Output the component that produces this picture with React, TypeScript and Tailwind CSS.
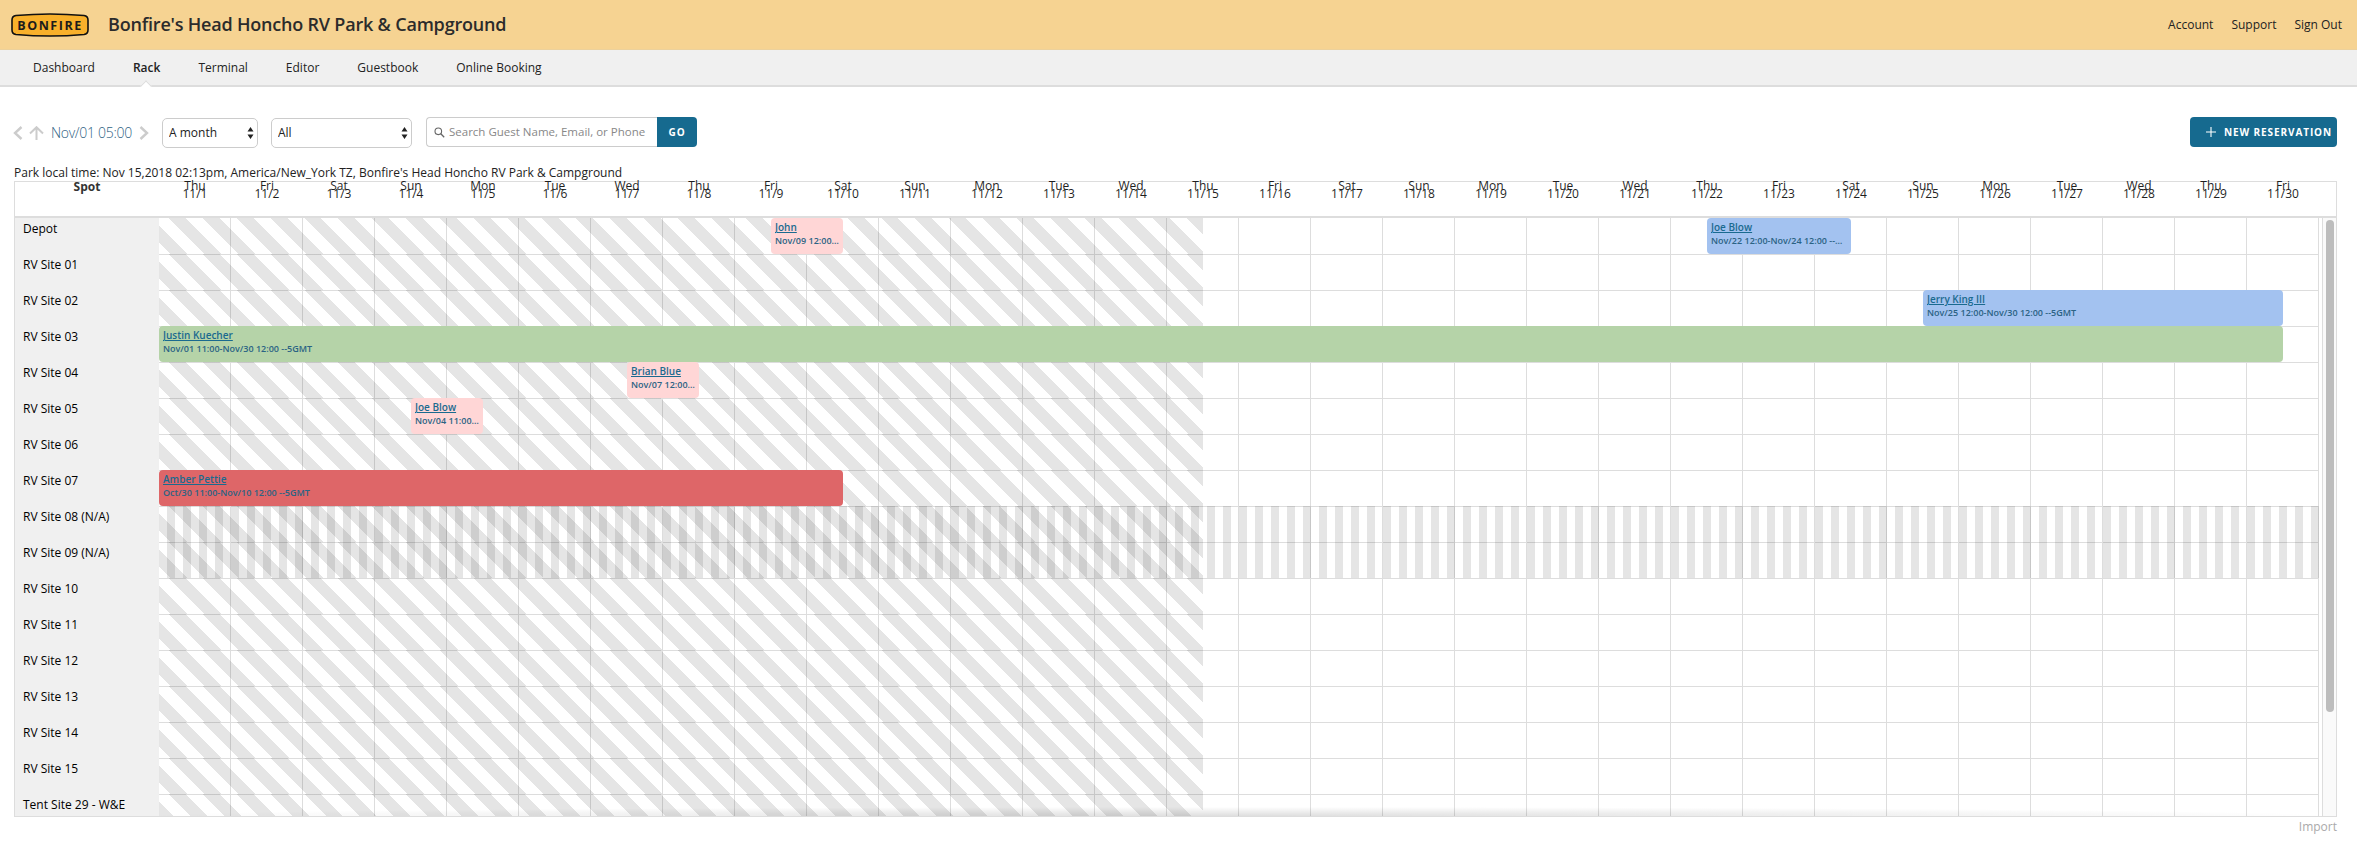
import React from "react";

const days = ["Thu","Fri","Sat","Sun","Mon","Tue","Wed"];
const dates = Array.from({ length: 30 }, (_, i) => ({ day: days[i % 7], date: `11/${i + 1}` }));
const spots = ["Depot","RV Site 01","RV Site 02","RV Site 03","RV Site 04","RV Site 05","RV Site 06","RV Site 07","RV Site 08 (N/A)","RV Site 09 (N/A)","RV Site 10","RV Site 11","RV Site 12","RV Site 13","RV Site 14","RV Site 15","Tent Site 29 - W&E"];

type Res = { row: number; start: number; span: number; name: string; info: string; cls: string };
const reservations: Res[] = [
  { row: 0, start: 8.5, span: 1, name: "John", info: "Nov/09 12:00-Nov/10 12:00 --5GMT", cls: "bg-[#ffd6d6]" },
  { row: 0, start: 21.5, span: 2, name: "Joe Blow", info: "Nov/22 12:00-Nov/24 12:00 --5GMT", cls: "bg-[#a3c2f0]" },
  { row: 2, start: 24.5, span: 5, name: "Jerry King III", info: "Nov/25 12:00-Nov/30 12:00 --5GMT", cls: "bg-[#a3c2f0]" },
  { row: 3, start: 0, span: 29.5, name: "Justin Kuecher", info: "Nov/01 11:00-Nov/30 12:00 --5GMT", cls: "bg-[#b5d3a8]" },
  { row: 4, start: 6.5, span: 1, name: "Brian Blue", info: "Nov/07 12:00-Nov/08 12:00 --5GMT", cls: "bg-[#ffd6d6]" },
  { row: 5, start: 3.5, span: 1, name: "Joe Blow", info: "Nov/04 11:00-Nov/05 12:00 --5GMT", cls: "bg-[#ffd6d6]" },
  { row: 7, start: 0, span: 9.5, name: "Amber Pettie", info: "Oct/30 11:00-Nov/10 12:00 --5GMT", cls: "bg-[#de6668]" },
];

function Logo() {
  return (
    <svg width="78" height="24" viewBox="0 0 78 24" className="shrink-0">
      <path d="M5 2.5 Q39 -0.5 73 2.5 Q77 3 77 7 V17 Q77 21 73 21.5 Q39 24.5 5 21.5 Q1 21 1 17 V7 Q1 3 5 2.5 Z" fill="#f8b02b" stroke="#111" strokeWidth="1.6" />
      <text x="39" y="16.8" textAnchor="middle" fontFamily="'Open Sans', sans-serif" fontWeight="700" fontSize="12.5" letterSpacing="1.55" fill="#1b1b1b">BONFIRE</text>
    </svg>
  );
}

function SelectBox({ label, cls }: { label: string; cls: string }) {
  return (
    <div className={`relative h-[30px] mt-px ${cls}`}>
      <select defaultValue={label} className="w-full h-full appearance-none bg-white border border-[#ccc] rounded-[5px] pl-[6px] text-[12px] text-[#222] outline-none">
        <option>{label}</option>
      </select>
      <svg width="7" height="12" viewBox="0 0 7 12" className="absolute right-[4px] top-[9px] pointer-events-none">
        <path d="M3.5 0 L6.5 4.5 H0.5 Z M3.5 12 L6.5 7.5 H0.5 Z" fill="#222" />
      </svg>
    </div>
  );
}

function Row({ label, index }: { label: string; index: number }) {
  const na = label.includes("N/A");
  const bars = reservations.filter((r) => r.row === index);
  return (
    <div className="flex h-[36px] shrink-0">
      <div className="w-[144px] shrink-0 bg-[#f0f0f0] pl-[8px] text-[12px] leading-[22px] text-black whitespace-nowrap">{label}</div>
      <div className="relative flex w-[2160px] shrink-0">
        {dates.map((d) => (
          <div key={d.date} className={`w-[72px] shrink-0 border-r border-[#ddd] ${index === 0 ? "" : "border-t"}`} />
        ))}
        {na && (
          <div className="absolute inset-0 bg-[repeating-linear-gradient(90deg,transparent_0,transparent_8px,rgba(0,0,0,0.1)_8px,rgba(0,0,0,0.1)_16px)]" />
        )}
        <div className="absolute left-0 top-0 bottom-0 w-[1044px] bg-[repeating-linear-gradient(45deg,transparent_0,transparent_8px,rgba(0,0,0,0.1)_8px,rgba(0,0,0,0.1)_20px,transparent_20px,transparent_24px)]" />
        {bars.map((b) => (
          <div
            key={b.name + b.start}
            className={`absolute top-0 h-[36px] rounded-[4px] px-[4px] overflow-hidden ${b.cls}`}
            style={{ left: b.start * 72, width: b.span * 72 }}
          >
            <a className="block truncate text-[10px] font-semibold leading-[14px] mt-[2px] underline text-[#1a6a8f]">{b.name}</a>
            <div className="truncate text-[9px] font-semibold leading-[14px] text-[#2b6384]">{b.info}</div>
          </div>
        ))}
      </div>
    </div>
  );
}

export default function App() {
  return (
    <div className="font-['Open_Sans',sans-serif] bg-white h-[851px] overflow-hidden text-[12px] text-[#222]">
      <header className="h-[50px] bg-[#f6d392] border-b border-[#ecd19c] flex items-center pl-[11px] pr-[15px]">
        <Logo />
        <h1 className="ml-[19px] text-[18px] font-semibold text-[#2b2b2b] tracking-[-0.2px]">Bonfire's Head Honcho RV Park &amp; Campground</h1>
        <div className="ml-auto flex gap-[18px] text-[12px] text-[#222]">
          <span>Account</span>
          <span>Support</span>
          <span>Sign Out</span>
        </div>
      </header>

      <nav className="h-[37px] bg-[#f0f0f0] border-b-2 border-[#ddd] flex items-center pl-[33px] gap-[38px] text-[12px] text-[#222]">
        <span>Dashboard</span>
        <span className="relative font-semibold self-stretch flex items-center">
          Rack
          <span className="absolute left-[9px] bottom-[-5px] w-[8px] h-[8px] rotate-45 bg-white border-l border-t border-[#ddd]" />
        </span>
        <span>Terminal</span>
        <span>Editor</span>
        <span>Guestbook</span>
        <span>Online Booking</span>
      </nav>

      <main className="pl-[14px] pr-[20px]">
        <div className="mt-[30px] h-[31px] flex items-start">
          <div className="flex items-center h-[31px] w-[148px] shrink-0">
            <svg width="10" height="14" viewBox="0 0 10 14" className="-ml-px shrink-0">
              <path d="M8.5 1 L2 7 L8.5 13" fill="none" stroke="#ccc" strokeWidth="2.4" />
            </svg>
            <svg width="15" height="14" viewBox="0 0 15 14" className="ml-[6px] shrink-0">
              <path d="M1 7.5 L7.5 1.2 L14 7.5 M7.5 2 V14" fill="none" stroke="#ccc" strokeWidth="2" />
            </svg>
            <span className="ml-[7px] text-[14px] font-light tracking-[-0.3px] text-[#2f6384] whitespace-nowrap">Nov/01 05:00</span>
            <svg width="10" height="14" viewBox="0 0 10 14" className="ml-[7px] shrink-0">
              <path d="M1.5 1 L8 7 L1.5 13" fill="none" stroke="#ccc" strokeWidth="2.4" />
            </svg>
          </div>
          <SelectBox label="A month" cls="w-[96px]" />
          <SelectBox label="All" cls="w-[141px] ml-[13px]" />
          <div className="ml-[14px] flex h-[30px]">
            <div className="w-[231px] border border-r-0 border-[#ccc] rounded-l-[4px] flex items-center pl-[7px]">
              <svg width="11" height="11" viewBox="0 0 11 11" className="shrink-0">
                <circle cx="4.3" cy="4.3" r="3.3" fill="none" stroke="#666" strokeWidth="1.1" />
                <path d="M6.8 6.8 L10.2 10.2" stroke="#666" strokeWidth="1.3" />
              </svg>
              <input placeholder="Search Guest Name, Email, or Phone" className="ml-[4px] w-[205px] text-[11.5px] outline-none placeholder:text-[#888]" />
            </div>
            <button className="w-[40px] bg-[#166a8f] rounded-r-[4px] text-white text-[10px] font-bold tracking-[0.8px]">GO</button>
          </div>
          <button className="ml-auto w-[147px] h-[30px] bg-[#166a8f] rounded-[4px] text-white flex items-center pl-[16px]">
            <svg width="10" height="10" viewBox="0 0 10 10" className="shrink-0">
              <path d="M5 0 V10 M0 5 H10" stroke="#fff" strokeWidth="1.1" />
            </svg>
            <span className="ml-[8px] text-[10px] font-bold tracking-[0.9px] whitespace-nowrap">NEW RESERVATION</span>
          </button>
        </div>

        <div className="mt-[17px] h-[16px] text-[12px] leading-[16px] text-[#222] whitespace-nowrap">
          Park local time: Nov 15,2018 02:13pm, America/New_York TZ, Bonfire's Head Honcho RV Park &amp; Campground
        </div>

        <section className="border border-[#ddd] w-[2323px]">
          <div className="flex h-[36px] border-b-2 border-[#ddd]">
            <div className="w-[144px] shrink-0 text-center font-bold text-[12px] leading-[10px] text-[#333] whitespace-nowrap">Spot</div>
            {dates.map((d) => (
              <div key={d.date} className="w-[72px] shrink-0 text-center text-[12px] leading-[8px] text-[#1f1f1f]">
                <div>{d.day}</div>
                <div>{d.date}</div>
              </div>
            ))}
          </div>
          <div className="flex h-[598px] overflow-hidden">
            <div className="relative w-[2304px] shrink-0 flex flex-col">
              {spots.map((s, i) => (
                <Row key={s} label={s} index={i} />
              ))}
              <div className="absolute left-[144px] bottom-0 w-[2160px] h-[9px] bg-[radial-gradient(ellipse_at_bottom,rgba(0,0,0,0.13),transparent_72%)] pointer-events-none" />
            </div>
            <div className="ml-[3px] w-[14px] shrink-0 border-l border-[#ddd] bg-[#fafafa]">
              <div className="mt-[2px] ml-[3px] w-[8px] h-[492px] rounded-[4px] bg-[#bdbdbd]" />
            </div>
          </div>
        </section>

        <div className="w-[2323px] text-right text-[12px] leading-[20px] text-[#aaa]">Import</div>
      </main>
    </div>
  );
}
